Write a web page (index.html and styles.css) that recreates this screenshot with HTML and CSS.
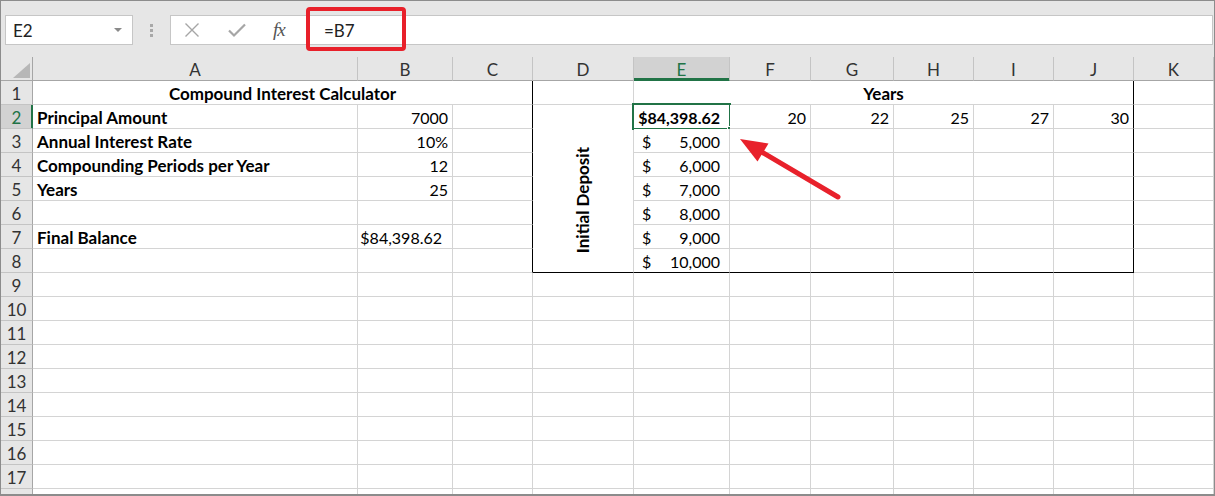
FILE: index.html
```html
<!DOCTYPE html>
<html>
<head>
<meta charset="utf-8">
<link rel="stylesheet" href="styles.css">
</head>
<body>
<div class="window">
  <div class="toolbar">
    <div class="namebox">
      <span class="namebox-text">E2</span>
      <svg class="dd" width="8" height="4" viewBox="0 0 8 4"><polygon points="0,0 8,0 4,4" fill="#8a8a8a"/></svg>
    </div>
    <div class="grip"><i></i><i></i><i></i></div>
    <div class="fbar">
      <div class="fbtns">
        <svg class="ico" width="16" height="16" viewBox="0 0 16 16"><path d="M1.5 1.5 L14.5 14.5 M14.5 1.5 L1.5 14.5" stroke="#a6a6a6" stroke-width="1.4" fill="none"/></svg>
        <svg class="ico" width="18" height="16" viewBox="0 0 18 16"><path d="M1 8.5 L6 13.5 L17 2.5" stroke="#a6a6a6" stroke-width="2.2" fill="none"/></svg>
        <span class="fx">fx</span>
      </div>
      <div class="finput">=B7</div>
    </div>
  </div>

  <div class="grid">
    <!-- header -->
    <div class="h corner"><svg width="17" height="15" viewBox="0 0 17 15"><polygon points="17,0 17,15 0,15" fill="#b7b7b7"/></svg></div>
    <div class="h">A</div><div class="h">B</div><div class="h">C</div><div class="h">D</div>
    <div class="h hsel">E</div><div class="h">F</div><div class="h">G</div><div class="h">H</div>
    <div class="h">I</div><div class="h">J</div><div class="h">K</div>

    <!-- row 1 -->
    <div class="rh">1</div>
    <div class="c span3 b center bkr">Compound Interest Calculator</div>
    <div class="c"></div>
    <div class="c span6 b center bkr">Years</div>
    <div class="c"></div>

    <!-- row 2 -->
    <div class="rh rsel">2</div>
    <div class="c b">Principal Amount</div>
    <div class="c r">7000</div>
    <div class="c bkr"></div>
    <div class="c deposit bkb"><span class="vert">Initial Deposit</span></div>
    <div class="c b r sel">$84,398.62<div class="selbox"></div><div class="handle"></div></div>
    <div class="c r n">20</div><div class="c r n">22</div><div class="c r n">25</div><div class="c r n">27</div>
    <div class="c r n bkr">30</div>
    <div class="c"></div>

    <!-- row 3 -->
    <div class="rh">3</div>
    <div class="c b">Annual Interest Rate</div>
    <div class="c r">10%</div>
    <div class="c bkr"></div>
    <div class="c acct"><span>$</span><span>5,000</span></div>
    <div class="c"></div><div class="c"></div><div class="c"></div><div class="c"></div><div class="c bkr"></div>
    <div class="c"></div>

    <!-- row 4 -->
    <div class="rh">4</div>
    <div class="c b">Compounding Periods per Year</div>
    <div class="c r">12</div>
    <div class="c bkr"></div>
    <div class="c acct"><span>$</span><span>6,000</span></div>
    <div class="c"></div><div class="c"></div><div class="c"></div><div class="c"></div><div class="c bkr"></div>
    <div class="c"></div>

    <!-- row 5 -->
    <div class="rh">5</div>
    <div class="c b">Years</div>
    <div class="c r">25</div>
    <div class="c bkr"></div>
    <div class="c acct"><span>$</span><span>7,000</span></div>
    <div class="c"></div><div class="c"></div><div class="c"></div><div class="c"></div><div class="c bkr"></div>
    <div class="c"></div>

    <!-- row 6 -->
    <div class="rh">6</div>
    <div class="c"></div>
    <div class="c"></div>
    <div class="c bkr"></div>
    <div class="c acct"><span>$</span><span>8,000</span></div>
    <div class="c"></div><div class="c"></div><div class="c"></div><div class="c"></div><div class="c bkr"></div>
    <div class="c"></div>

    <!-- row 7 -->
    <div class="rh">7</div>
    <div class="c b">Final Balance</div>
    <div class="c r cur">$84,398.62</div>
    <div class="c bkr"></div>
    <div class="c acct"><span>$</span><span>9,000</span></div>
    <div class="c"></div><div class="c"></div><div class="c"></div><div class="c"></div><div class="c bkr"></div>
    <div class="c"></div>

    <!-- row 8 -->
    <div class="rh">8</div>
    <div class="c"></div>
    <div class="c"></div>
    <div class="c bkr"></div>
    <div class="c acct bkb"><span>$</span><span>10,000</span></div>
    <div class="c bkb"></div><div class="c bkb"></div><div class="c bkb"></div><div class="c bkb"></div><div class="c bkb bkr"></div>
    <div class="c"></div>

    <!-- rows 9-17 -->
    <div class="rh">9</div><div class="c"></div><div class="c"></div><div class="c"></div><div class="c"></div><div class="c"></div><div class="c"></div><div class="c"></div><div class="c"></div><div class="c"></div><div class="c"></div><div class="c"></div>
    <div class="rh">10</div><div class="c"></div><div class="c"></div><div class="c"></div><div class="c"></div><div class="c"></div><div class="c"></div><div class="c"></div><div class="c"></div><div class="c"></div><div class="c"></div><div class="c"></div>
    <div class="rh">11</div><div class="c"></div><div class="c"></div><div class="c"></div><div class="c"></div><div class="c"></div><div class="c"></div><div class="c"></div><div class="c"></div><div class="c"></div><div class="c"></div><div class="c"></div>
    <div class="rh">12</div><div class="c"></div><div class="c"></div><div class="c"></div><div class="c"></div><div class="c"></div><div class="c"></div><div class="c"></div><div class="c"></div><div class="c"></div><div class="c"></div><div class="c"></div>
    <div class="rh">13</div><div class="c"></div><div class="c"></div><div class="c"></div><div class="c"></div><div class="c"></div><div class="c"></div><div class="c"></div><div class="c"></div><div class="c"></div><div class="c"></div><div class="c"></div>
    <div class="rh">14</div><div class="c"></div><div class="c"></div><div class="c"></div><div class="c"></div><div class="c"></div><div class="c"></div><div class="c"></div><div class="c"></div><div class="c"></div><div class="c"></div><div class="c"></div>
    <div class="rh">15</div><div class="c"></div><div class="c"></div><div class="c"></div><div class="c"></div><div class="c"></div><div class="c"></div><div class="c"></div><div class="c"></div><div class="c"></div><div class="c"></div><div class="c"></div>
    <div class="rh">16</div><div class="c"></div><div class="c"></div><div class="c"></div><div class="c"></div><div class="c"></div><div class="c"></div><div class="c"></div><div class="c"></div><div class="c"></div><div class="c"></div><div class="c"></div>
    <div class="rh">17</div><div class="c"></div><div class="c"></div><div class="c"></div><div class="c"></div><div class="c"></div><div class="c"></div><div class="c"></div><div class="c"></div><div class="c"></div><div class="c"></div><div class="c"></div>
    <div class="rh"></div><div class="c"></div><div class="c"></div><div class="c"></div><div class="c"></div><div class="c"></div><div class="c"></div><div class="c"></div><div class="c"></div><div class="c"></div><div class="c"></div><div class="c"></div>
  </div>

  <div class="redbox"></div>
  <svg class="arrow" width="1215" height="496" viewBox="0 0 1215 496">
    <line x1="838" y1="197" x2="760" y2="151" stroke="#e8212b" stroke-width="5" stroke-linecap="round"/>
    <polygon points="740,139 768.5,143.5 757.5,161.5" fill="#e8212b"/>
  </svg>
</div>
</body>
</html>
```

FILE: styles.css
```css
* { box-sizing: border-box; }
html, body { margin: 0; padding: 0; }
body {
  width: 1215px;
  height: 496px;
  overflow: hidden;
  background: #e6e6e6;
  font-family: "Lato", "Liberation Sans", sans-serif;
}
.window {
  position: relative;
  width: 1215px;
  height: 496px;
  border: 1px solid #8c8c8c;
  border-bottom-width: 2px;
  background: #e6e6e6;
  overflow: hidden;
}
.toolbar {
  height: 56px;
  display: flex;
  align-items: flex-start;
  padding: 14px 1px 0 4px;
}
.namebox {
  width: 128px;
  height: 30px;
  background: #fff;
  border: 1px solid #c6c6c6;
  display: flex;
  align-items: center;
  justify-content: space-between;
  padding: 0 10px 0 7px;
}
.namebox-text { font-size: 17px; color: #222; }
.grip {
  width: 37px;
  height: 30px;
  display: flex;
  flex-direction: column;
  align-items: center;
  justify-content: center;
  gap: 2px;
}
.grip i {
  display: block;
  width: 3px;
  height: 3px;
  background: #a8a8a8;
}
.fbar {
  flex: 1;
  height: 30px;
  background: #fff;
  border: 1px solid #c6c6c6;
  display: flex;
  align-items: center;
}
.fbtns {
  width: 133px;
  height: 100%;
  display: flex;
  align-items: center;
  padding-left: 13px;
}
.fbtns .ico { margin-right: 28px; }
.fbtns .ico + .ico { margin-right: 27px; }
.fx {
  font-family: "Liberation Serif", serif;
  font-style: italic;
  font-size: 19px;
  color: #555;
  letter-spacing: -1px;
}
.finput {
  font-size: 17px;
  color: #222;
  padding-left: 20px;
}

.grid {
  display: grid;
  grid-template-columns: 32px 325px 95px 80px 101px 96px 81px 83px 80px 80px 80px 80px;
  grid-auto-rows: 24px;
}
.h {
  background: #e6e6e6;
  border-right: 1px solid #c4c4c4;
  border-bottom: 1px solid #a6a6a6;
  display: flex;
  align-items: center;
  justify-content: center;
  font-size: 17px;
  color: #333;
  padding-top: 1px;
}
.corner {
  justify-content: flex-end;
  align-items: flex-end;
  padding: 0 2px 2px 0;
  border-right: 1px solid #a6a6a6;
}
.hsel {
  background: #d2d2d2;
  color: #217346;
  border-bottom: 1px solid #217346;
  box-shadow: inset 0 -2px 0 #217346;
}
.rh {
  background: #e6e6e6;
  border-right: 1px solid #a6a6a6;
  border-bottom: 1px solid #c4c4c4;
  display: flex;
  align-items: center;
  justify-content: center;
  font-size: 17px;
  color: #333;
  padding-top: 1px;
}
.rsel {
  background: #d2d2d2;
  color: #217346;
  border-right: 1px solid #217346;
  box-shadow: inset -1px 0 0 #217346;
}
.c {
  background: #fff;
  border-right: 1px solid #d4d4d4;
  border-bottom: 1px solid #d4d4d4;
  display: flex;
  align-items: center;
  padding: 1px 4px 0 4px;
  font-size: 17px;
  color: #000;
  white-space: nowrap;
  position: relative;
}
.b { font-weight: bold; }
.r { justify-content: flex-end; font-size: 16px; }
.center { justify-content: center; }
.span3 { grid-column: span 3; }
.span6 { grid-column: span 6; }
.bkr { border-right-color: #000; }
.bkb { border-bottom-color: #000; }
.cur { padding-right: 10px; }
.sel { padding-right: 9px; }
.n { padding-right: 4px; }
.deposit {
  grid-row: span 7;
  justify-content: center;
  align-items: flex-end;
  padding: 0 0 19px 0;
}
.vert {
  writing-mode: vertical-rl;
  transform: rotate(180deg);
  font-weight: bold;
  margin-right: 2px;
}
.acct {
  justify-content: space-between;
  padding: 1px 9px 0 8px;
  font-size: 16px;
}
.selbox {
  position: absolute;
  left: -2px;
  top: -2px;
  right: -2px;
  bottom: -2px;
  border: 2px solid #217346;
}
.handle {
  position: absolute;
  right: -5px;
  bottom: -5px;
  width: 7px;
  height: 7px;
  background: #217346;
  border: 1px solid #fff;
}
.redbox {
  position: absolute;
  left: 305px;
  top: 6px;
  width: 100px;
  height: 44px;
  border: 4px solid #e8202a;
  border-radius: 4px;
}
.arrow {
  position: absolute;
  left: -1px;
  top: -1px;
  pointer-events: none;
}
```
